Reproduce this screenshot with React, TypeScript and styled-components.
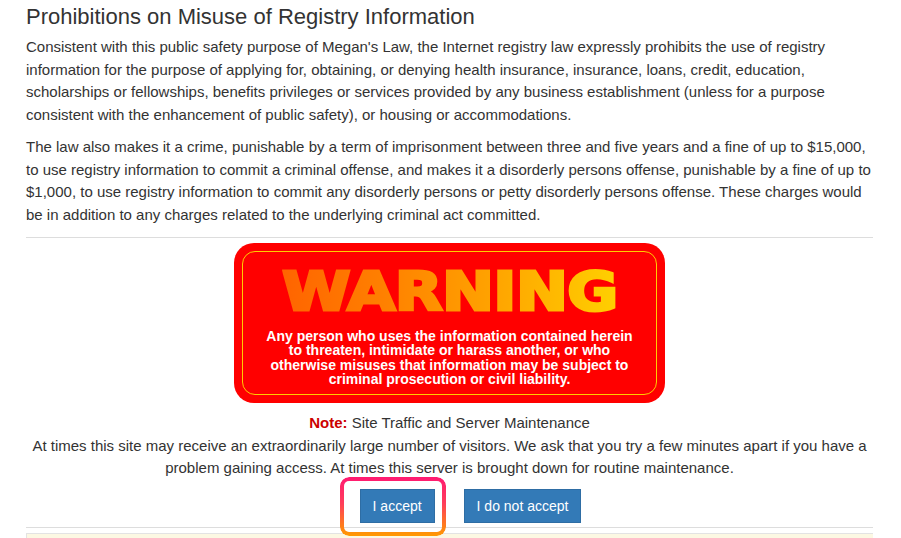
import React from "react";
import styled, { createGlobalStyle } from "styled-components";

const Global = createGlobalStyle`
  html, body { margin: 0; padding: 0; background: #fff; }
  body { font-family: "Liberation Sans", Arial, sans-serif; color: #333; }
`;

const Page = styled.div`
  padding: 0 28px 0 26px;
  width: 847px;
`;

const Title = styled.h3`
  margin: 4px 0 6px;
  font-size: 22px;
  line-height: 26px;
  font-weight: 400;
  color: #333;
`;

const Para = styled.p`
  margin: 0 0 10px;
  font-size: 15px;
  line-height: 22.5px;
`;

const Rule = styled.hr<{ $top: number; $bottom: number }>`
  border: 0;
  border-top: 1px solid #ddd;
  margin: ${(p) => p.$top}px 0 ${(p) => p.$bottom}px;
`;

const WarningBox = styled.div`
  width: 431px;
  height: 160px;
  margin: 0 auto;
  box-sizing: border-box;
  background: #ff0000;
  border-radius: 20px;
  padding: 8px;
`;

const WarningInner = styled.div`
  height: 100%;
  box-sizing: border-box;
  border: 1px solid #ffcc00;
  border-radius: 13px;
  display: flex;
  flex-direction: column;
  align-items: center;
`;

const WarningWord = styled.div`
  margin-top: 9px;
  font-family: "DejaVu Sans", "Liberation Sans", sans-serif;
  font-weight: 900;
  font-size: 54px;
  line-height: 62px;
  letter-spacing: -0.5px;
  transform: scaleX(1.15);
  background: linear-gradient(90deg, #ff6400 0%, #ff8000 30%, #ffa000 60%, #ffd000 100%);
  -webkit-background-clip: text;
  background-clip: text;
  color: transparent;
  -webkit-text-stroke: 3px transparent;
`;

const WarningText = styled.div`
  margin-top: 6px;
  font-family: "Liberation Sans", Arial, sans-serif;
  font-weight: 700;
  font-size: 14px;
  line-height: 14.3px;
  color: #fff;
  text-align: center;
`;

const Notice = styled.div`
  margin-top: 9px;
  font-size: 15px;
  line-height: 22.5px;
  text-align: center;
`;

const NoteLabel = styled.strong`
  color: #cc0000;
  font-weight: 700;
`;

const Buttons = styled.div`
  display: flex;
  justify-content: center;
  gap: 29px;
  margin-top: 9px;
  padding-left: 42px;
`;

const Btn = styled.button`
  position: relative;
  font-family: "Liberation Sans", Arial, sans-serif;
  font-size: 14px;
  line-height: 20px;
  padding: 6px 12px;
  color: #fff;
  background: #337ab7;
  border: 1px solid #2e6da4;
  border-radius: 0;
  cursor: pointer;
`;

const Highlight = styled.span`
  position: absolute;
  left: -21px;
  right: -12px;
  top: -13px;
  bottom: -14px;
  border-radius: 9px;
  padding: 4px;
  background: linear-gradient(180deg, #ff1a72 0%, #ff3e5a 45%, #ff9a00 100%);
  -webkit-mask: linear-gradient(#000 0 0) content-box, linear-gradient(#000 0 0);
  -webkit-mask-composite: xor;
  mask-composite: exclude;
  pointer-events: none;
`;

const Well = styled.div`
  height: 60px;
  background: #fcf8e3;
  border: 1px solid #e3e3e3;
  border-right: 0;
`;

export default function App() {
  return (
    <>
      <Global />
      <Page>
        <Title>Prohibitions on Misuse of Registry Information</Title>
        <Para>
          Consistent with this public safety purpose of Megan's Law, the Internet registry law expressly prohibits the use of registry
          information for the purpose of applying for, obtaining, or denying health insurance, insurance, loans, credit, education,
          scholarships or fellowships, benefits privileges or services provided by any business establishment (unless for a purpose
          consistent with the enhancement of public safety), or housing or accommodations.
        </Para>
        <Para>
          The law also makes it a crime, punishable by a term of imprisonment between three and five years and a fine of up to $15,000,
          to use registry information to commit a criminal offense, and makes it a disorderly persons offense, punishable by a fine of up to
          $1,000, to use registry information to commit any disorderly persons or petty disorderly persons offense. These charges would
          be in addition to any charges related to the underlying criminal act committed.
        </Para>
        <Rule $top={11} $bottom={5} />
        <WarningBox>
          <WarningInner>
            <WarningWord>WARNING</WarningWord>
            <WarningText>
              Any person who uses the information contained herein
              <br />
              to threaten, intimidate or harass another, or who
              <br />
              otherwise misuses that information may be subject to
              <br />
              criminal prosecution or civil liability.
            </WarningText>
          </WarningInner>
        </WarningBox>
        <Notice>
          <NoteLabel>Note:</NoteLabel> Site Traffic and Server Maintenance
          <br />
          At times this site may receive an extraordinarily large number of visitors. We ask that you try a few minutes apart if you have a
          problem gaining access. At times this server is brought down for routine maintenance.
        </Notice>
        <Buttons>
          <Btn>
            I accept
            <Highlight />
          </Btn>
          <Btn>I do not accept</Btn>
        </Buttons>
        <Rule $top={4} $bottom={5} />
        <Well />
      </Page>
    </>
  );
}
